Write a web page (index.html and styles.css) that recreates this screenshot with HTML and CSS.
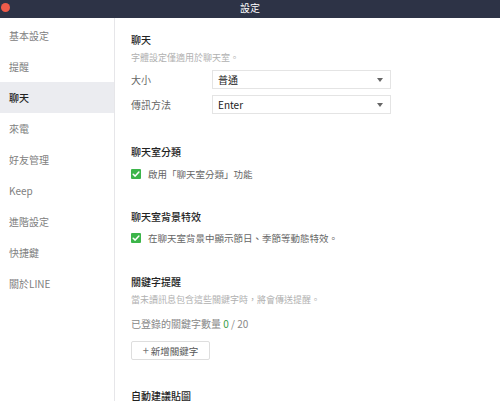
FILE: index.html
```html
<!DOCTYPE html>
<html lang="zh-Hant">
<head>
<meta charset="utf-8">
<title>設定</title>
<link rel="stylesheet" href="styles.css">
</head>
<body>
<div class="window">
  <div class="titlebar">
    <span class="close"></span>
    <span class="title">設定</span>
  </div>
  <div class="body">
    <nav class="sidebar">
      <div class="nav-item">基本設定</div>
      <div class="nav-item">提醒</div>
      <div class="nav-item active">聊天</div>
      <div class="nav-item">來電</div>
      <div class="nav-item">好友管理</div>
      <div class="nav-item">Keep</div>
      <div class="nav-item">進階設定</div>
      <div class="nav-item">快捷鍵</div>
      <div class="nav-item">關於LINE</div>
    </nav>
    <main class="content">
      <section class="section s-chat">
        <h2 class="heading">聊天</h2>
        <p class="note">字體設定僅適用於聊天室。</p>
        <div class="field f1">
          <span class="label">大小</span>
          <div class="select">普通<span class="arrow"></span></div>
        </div>
        <div class="field f2">
          <span class="label">傳訊方法</span>
          <div class="select">Enter<span class="arrow"></span></div>
        </div>
      </section>
      <section class="section s-cat">
        <h2 class="heading">聊天室分類</h2>
        <label class="check">
          <span class="box"><svg viewBox="0 0 10 10" width="10" height="10"><path d="M2.2 5.2 L4.2 7.1 L7.9 3.1" fill="none" stroke="#fff" stroke-width="1.5" stroke-linecap="round" stroke-linejoin="round"/></svg></span>
          <span>啟用「聊天室分類」功能</span>
        </label>
      </section>
      <section class="section s-bg">
        <h2 class="heading">聊天室背景特效</h2>
        <label class="check">
          <span class="box"><svg viewBox="0 0 10 10" width="10" height="10"><path d="M2.2 5.2 L4.2 7.1 L7.9 3.1" fill="none" stroke="#fff" stroke-width="1.5" stroke-linecap="round" stroke-linejoin="round"/></svg></span>
          <span>在聊天室背景中顯示節日、季節等動態特效。</span>
        </label>
      </section>
      <section class="section s-kw">
        <h2 class="heading">關鍵字提醒</h2>
        <p class="note">當未讀訊息包含這些關鍵字時，將會傳送提醒。</p>
        <p class="count">已登錄的關鍵字數量 <span class="num">0</span> / 20</p>
        <button class="add-btn"><span class="plus">+</span> 新增關鍵字</button>
      </section>
      <section class="section s-auto">
        <h2 class="heading">自動建議貼圖</h2>
      </section>
    </main>
  </div>
</div>
</body>
</html>
```

FILE: styles.css
```css
* { box-sizing: border-box; }
html, body {
  margin: 0;
  padding: 0;
  width: 500px;
  height: 401px;
  overflow: hidden;
  background: #fff;
  font-family: "Noto Sans CJK TC", "Liberation Sans", sans-serif;
  font-size: 10px;
  color: #333;
}
.window {
  display: flex;
  flex-direction: column;
  height: 401px;
}
.titlebar {
  height: 18px;
  background: #2d3346;
  display: flex;
  align-items: center;
  justify-content: center;
  position: relative;
  flex: none;
}
.close {
  position: absolute;
  left: 1px;
  top: 3px;
  width: 9px;
  height: 9px;
  border-radius: 50%;
  background: #ee5b4a;
}
.title {
  color: #fff;
  font-size: 10px;
  line-height: 14px;
  margin-top: -2px;
}
.body {
  display: flex;
  flex: 1;
  min-height: 0;
}
.sidebar {
  width: 115px;
  flex: none;
  border-right: 1px solid #e6e6e9;
  padding-top: 2px;
}
.nav-item {
  height: 31px;
  line-height: 31px;
  padding-left: 9px;
  color: #808080;
  font-size: 10px;
}
.nav-item.active {
  background: #ebecf0;
  color: #222;
  font-weight: 500;
}
.content {
  flex: 1;
  padding: 15px 0 0 16px;
}
.section { margin: 0; }
.heading {
  margin: 0;
  font-size: 10px;
  line-height: 14px;
  font-weight: 500;
  color: #222;
}
.note {
  margin: 4px 0 0;
  font-size: 9px;
  line-height: 14px;
  color: #b0b0b0;
}
.field {
  display: flex;
  align-items: center;
  height: 19px;
}
.f1 { margin-top: 5px; }
.f2 { margin-top: 6px; }
.label {
  width: 81px;
  color: #666;
  font-size: 10px;
}
.select {
  position: relative;
  width: 179px;
  height: 19px;
  line-height: 17px;
  border: 1px solid #e4e4e4;
  padding-left: 5px;
  font-size: 10px;
  color: #222;
}
.arrow {
  position: absolute;
  right: 7px;
  top: 7px;
  width: 0;
  height: 0;
  border-left: 3px solid transparent;
  border-right: 3px solid transparent;
  border-top: 4px solid #666;
}
.s-cat { margin-top: 31px; }
.s-bg { margin-top: 29px; }
.s-kw { margin-top: 30px; }
.s-auto { margin-top: 29px; }
.check {
  display: flex;
  align-items: center;
  gap: 7px;
  height: 14px;
  line-height: 14px;
  color: #666;
  font-size: 9.5px;
}
.s-cat .check { margin-top: 8px; }
.s-bg .check { margin-top: 7px; }
.box {
  width: 10px;
  height: 10px;
  border-radius: 1px;
  background: #3cb54a;
  display: flex;
  flex: none;
}
.count {
  margin: 10px 0 0;
  line-height: 14px;
  color: #888;
  font-size: 10px;
}
.num { color: #3a9e4a; }
.add-btn {
  margin-top: 10px;
  width: 79px;
  height: 19px;
  border: 1px solid #dedede;
  border-radius: 2px;
  background: #fff;
  font-family: inherit;
  font-size: 9.5px;
  color: #555;
  padding: 0;
  display: flex;
  align-items: center;
  justify-content: center;
  gap: 2px;
}
.plus {
  font-size: 11px;
  line-height: 1;
  color: #777;
}
```
